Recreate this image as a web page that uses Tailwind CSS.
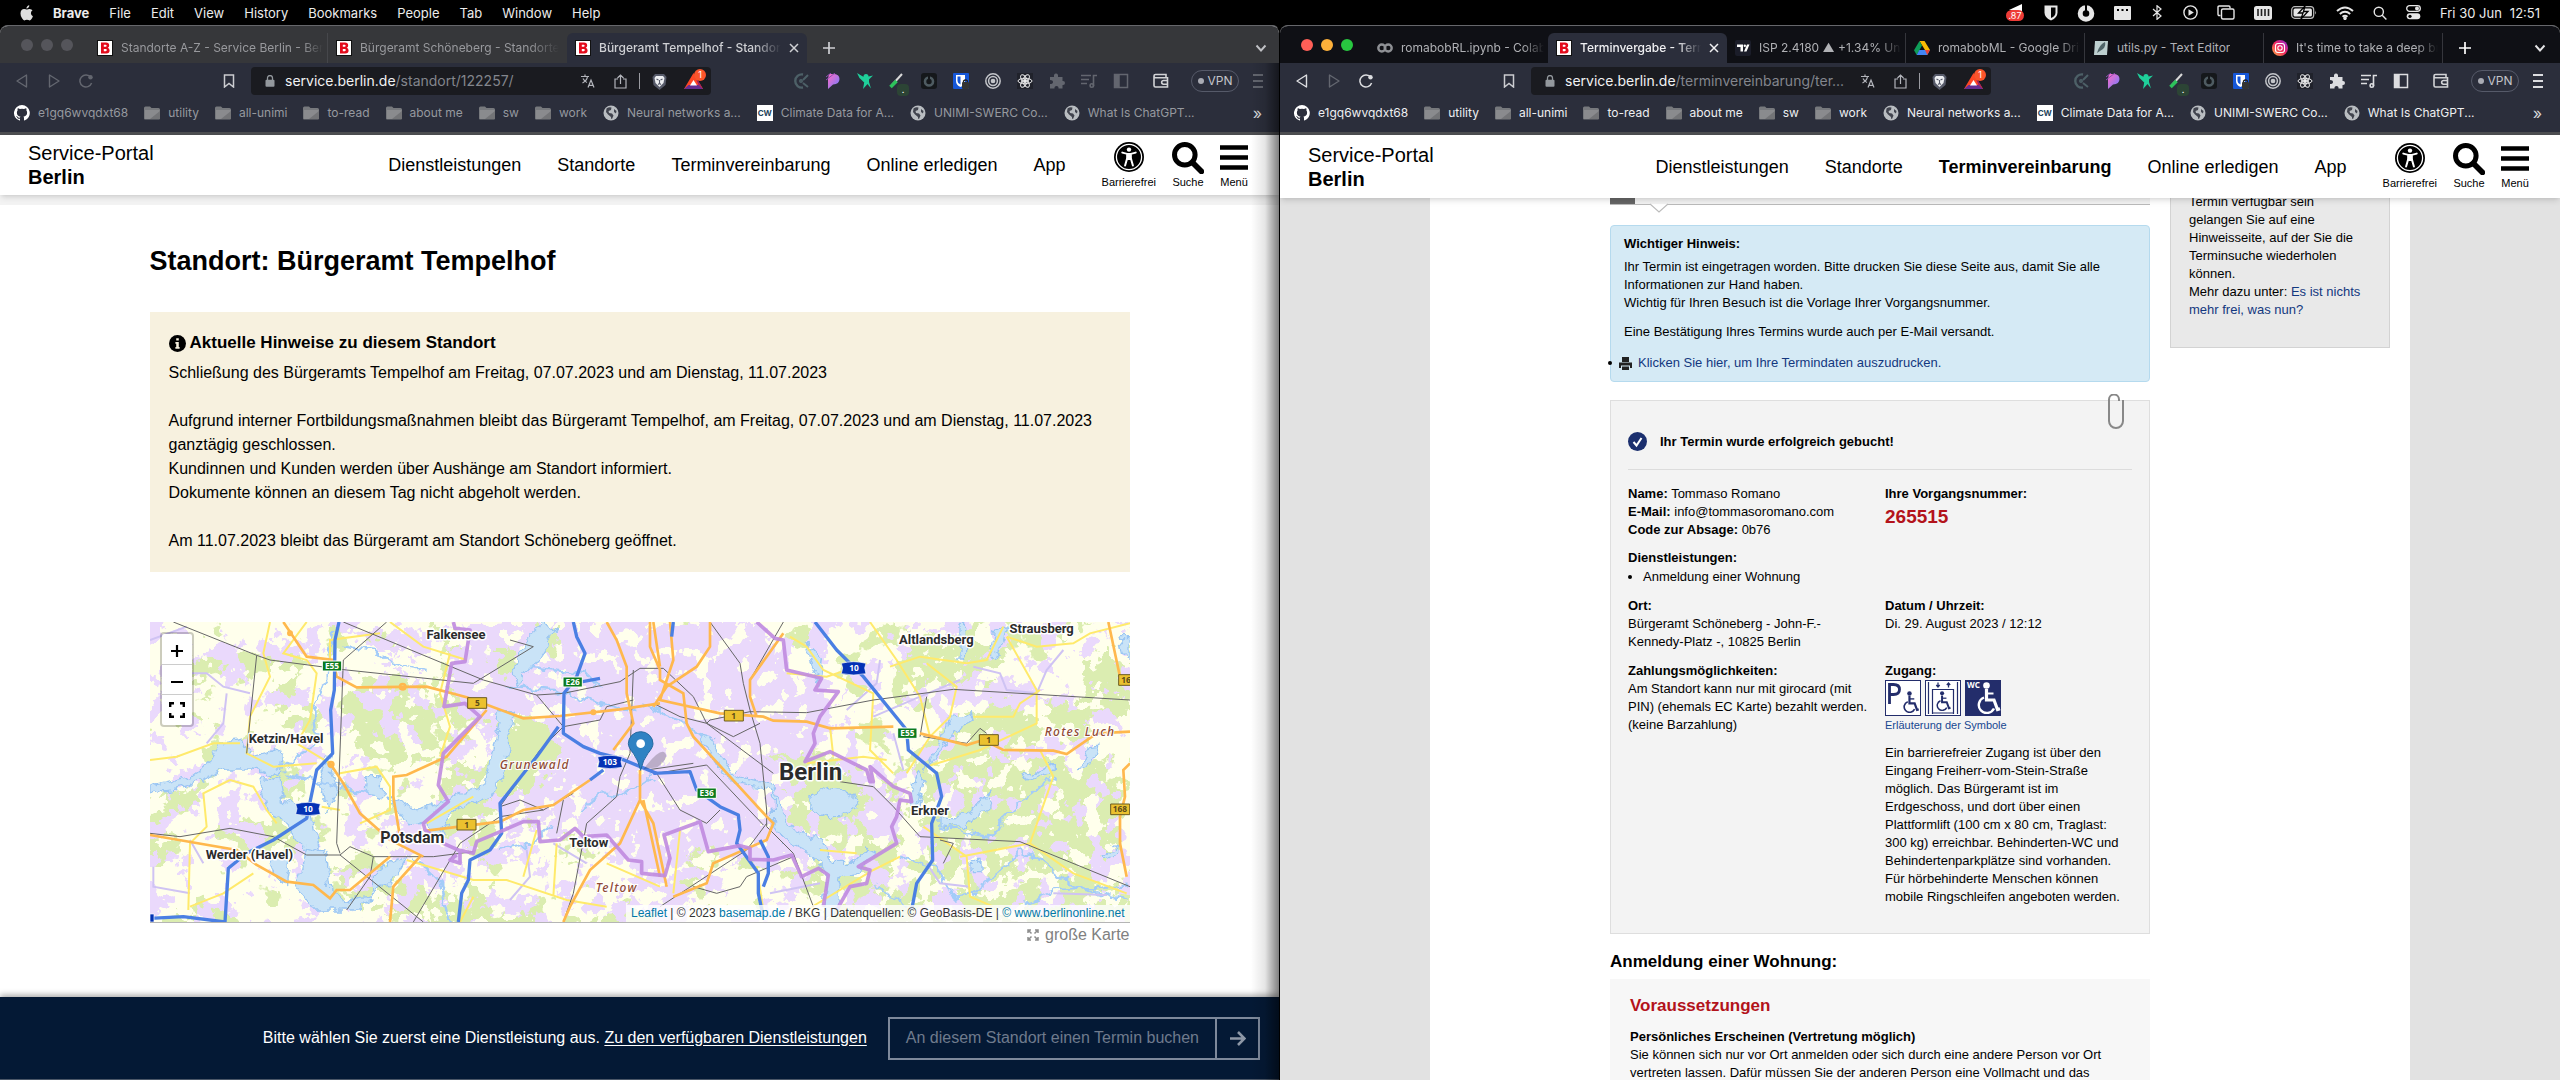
<!DOCTYPE html>
<html lang="de">
<head>
<meta charset="utf-8">
<title>Service-Portal Berlin</title>
<script src="https://cdn.jsdelivr.net/npm/@tailwindcss/browser@4"></script>
</head>
<body class="flex h-screen flex-col overflow-hidden bg-black font-['Liberation_Sans',Arial,sans-serif] text-black">

<!-- shared icon symbols -->
<svg class="hidden" aria-hidden="true">
  <symbol id="favB" viewBox="0 0 16 16"><rect width="16" height="16" fill="#111"/><rect x="1" y="1" width="14" height="14" fill="#fff"/><path fill="#e30b1c" fill-rule="evenodd" d="M4 2.500h5q3.200 0 3.200 2.900 0 1.700-1.500 2.400 1.900.6 1.900 2.700 0 3-3.300 3H4zM6.800 4.800v2h1.900q.9 0 .9-1t-.9-1zM6.800 8.900v2.300h2q1 0 1-1.100T8.800 8.900z"/></symbol>
  <symbol id="close" viewBox="0 0 10 10"><path d="M1 1l8 8M9 1L1 9" stroke="currentColor" stroke-width="1.500"/></symbol>
  <symbol id="plus" viewBox="0 0 12 12"><path d="M6 0v12M0 6h12" stroke="currentColor" stroke-width="1.700"/></symbol>
  <symbol id="chev" viewBox="0 0 12 12"><path d="M1.500 3.500L6 8.500l4.500-5" fill="none" stroke="currentColor" stroke-width="1.900"/></symbol>
  <symbol id="back" viewBox="0 0 14 14"><path d="M11.500 1v12L2 7z" fill="none" stroke="currentColor" stroke-width="1.400" stroke-linejoin="round"/></symbol>
  <symbol id="fwd" viewBox="0 0 14 14"><path d="M2.500 1v12L12 7z" fill="none" stroke="currentColor" stroke-width="1.400" stroke-linejoin="round"/></symbol>
  <symbol id="reload" viewBox="0 0 14 14"><path d="M11.800 3.500A6 6 0 1 0 12.600 9" fill="none" stroke="currentColor" stroke-width="1.500"/><circle cx="11.500" cy="3.200" r="2.200" fill="currentColor"/></symbol>
  <symbol id="lock" viewBox="0 0 10 12"><rect x="0.500" y="4.800" width="9" height="7" rx="1" fill="currentColor"/><path d="M2.500 5V3a2.500 2.500 0 0 1 5 0v2" fill="none" stroke="currentColor" stroke-width="1.300"/></symbol>
  <symbol id="globe" viewBox="0 0 16 16"><circle cx="8" cy="8" r="7.500" fill="#b9bdc1"/><path d="M3.500 3.500Q6 1.500 8.500 2.500L8 5 5.500 6l.5 2 3 .5 1.500 2-1.500 3.500q-1.500 0-1-2L5 9.500 3 7zM11 4l2.500 2-.5 2.500-2-1.500z" fill="#41444e"/></symbol>
  <symbol id="folder" viewBox="0 0 16 14"><path d="M0 2Q0 .5 1.500.5H6L7.500 2H14.500Q16 2 16 3.500V12.500Q16 13.500 15 13.500H1Q0 13.500 0 12.500z" fill="#77797d"/><path d="M1 4h14.500v9H1z" fill="#8a8b8e"/><path d="M16 5v8H6z" fill="#737477"/></symbol>
  <symbol id="a11y" viewBox="0 0 30 30"><circle cx="15" cy="15" r="15"/><circle cx="15" cy="15" r="12.600" fill="none" stroke="#fff" stroke-width="1.300"/><circle cx="15" cy="7.600" r="2.200" fill="#fff"/><path d="M8.300 10.600l5 1.300v4l-2.200 7.600M21.700 10.600l-5 1.300v4l2.200 7.600" fill="none" stroke="#fff" stroke-width="2" stroke-linecap="round"/><path d="M12.500 11h5v7h-5z" fill="#fff"/></symbol>
  <symbol id="lens" viewBox="0 0 32 32"><circle cx="12.800" cy="12.800" r="10.300" fill="none" stroke="#000" stroke-width="5"/><path d="M20.500 20.500l9 9" stroke="#000" stroke-width="5.600" stroke-linecap="round"/></symbol>
  <symbol id="burger" viewBox="0 0 28 26"><path d="M0 2.500h28M0 12.500h28M0 22.500h28" stroke="#000" stroke-width="4.600"/></symbol>
  <symbol id="wheel" viewBox="0 0 24 32"><circle cx="10.500" cy="3.500" r="3.300" fill="currentColor"/><path d="M10.500 7v11h7.500l3.500 9.500 2.500-.8" fill="none" stroke="currentColor" stroke-width="3.200"/><path d="M10.500 11.500h7" stroke="currentColor" stroke-width="2"/><path d="M8 15.500a8 8 0 1 0 10 11" fill="none" stroke="currentColor" stroke-width="2.400"/></symbol>
</svg>

<!-- system menu bar -->
<header class="flex h-[25px] shrink-0 items-center justify-between bg-black pr-5 pl-5 font-[Inter,sans-serif] text-[13px] leading-[16px] text-[#ececec]">
  <nav class="flex items-center gap-5" aria-label="Menü">
    <svg class="h-4 w-[13px]" viewBox="0 0 13 16" fill="#dedede"><path d="M9.300.3q.1 1.300-.8 2.300-.9 1.100-2.100 1-.1-1.200.8-2.200Q8.100.4 9.300.3zM12.500 5.300q-1.600 1-1.600 2.900 0 2.200 2 3.100-.5 1.500-1.400 2.800-.9 1.300-1.900 1.300-.5 0-1.200-.3-.8-.3-1.500-.3t-1.400.3q-.7.300-1.100.3-1.200 0-2.500-2.300Q.5 10.800.5 8.500q0-2.100 1.100-3.400T4.200 3.900q.8 0 1.600.4.700.3 1 .3.400 0 1.200-.4.900-.4 1.700-.3 1.900.1 2.800 1.400z"/></svg>
    <span class="font-bold">Brave</span><span>File</span><span>Edit</span><span>View</span><span>History</span><span>Bookmarks</span><span>People</span><span>Tab</span><span>Window</span><span>Help</span>
  </nav>
  <div class="flex items-center gap-[19px]">
    <svg class="h-[18px] w-5" viewBox="0 0 20 18"><path d="M4 6L17 0v7z" fill="#fff"/><rect x="1" y="6" width="18" height="11" rx="5.500" fill="#ee3b37"/><text x="10" y="15" font-size="9" fill="#fff" text-anchor="middle" font-family="Inter">.87</text></svg>
    <svg class="h-4 w-[14px]" viewBox="0 0 14 16"><path d="M.5.500h13v7q0 5-6.500 8Q.5 12.500.5 7.500z" fill="#e6e6e6"/><path d="M7 2.500h4.500v5q0 3.500-4.500 5.600z" fill="#000"/></svg>
    <svg class="h-[18px] w-[18px]" viewBox="0 0 18 18"><circle cx="9" cy="9.500" r="5.800" fill="none" stroke="#e6e6e6" stroke-width="5"/><path d="M9 0v9" stroke="#000" stroke-width="2"/></svg>
    <svg class="h-[14px] w-[17px]" viewBox="0 0 17 14"><rect width="17" height="14" rx="1" fill="#e6e6e6"/><path d="M3 3h2v2H3zM7.500 3h2v2h-2zM12 3h2v2h-2z" fill="#000"/></svg>
    <svg class="h-[15px] w-[14px]" viewBox="0 0 14 15"><path d="M3 4l8 7-4 3.300V.7L11 4l-8 7" fill="none" stroke="#e6e6e6" stroke-width="1.200"/></svg>
    <svg class="h-[15px] w-[15px]" viewBox="0 0 15 15"><circle cx="7.500" cy="7.500" r="6.600" fill="none" stroke="#e6e6e6" stroke-width="1.400"/><path d="M5.500 4.300v6.400l5.300-3.200z" fill="#e6e6e6"/></svg>
    <svg class="h-[15px] w-[18px]" viewBox="0 0 18 15"><path d="M3.500 10.500H2.200Q1 10.500 1 9.300V2.200Q1 1 2.200 1h9.600Q13 1 13 2.200V3.500" fill="none" stroke="#e6e6e6" stroke-width="1.400"/><rect x="4.500" y="4" width="12.500" height="10" rx="1.500" fill="none" stroke="#e6e6e6" stroke-width="1.400"/></svg>
    <svg class="h-[14px] w-[18px]" viewBox="0 0 18 14"><rect width="18" height="14" rx="2.500" fill="#e6e6e6"/><path d="M4 3v7M7.500 3v7M11 3v7M14.500 3v7" stroke="#222" stroke-width="1.600"/></svg>
    <svg class="h-[13px] w-[26px]" viewBox="0 0 26 13"><rect x=".7" y=".7" width="22" height="11.600" rx="3" fill="none" stroke="#bbb" stroke-width="1.200"/><rect x="2.500" y="2.500" width="18.400" height="8" rx="1.500" fill="#e6e6e6"/><path d="M14 0L7.500 7H12l-2 6 7-7.500h-4.500z" fill="#e6e6e6" stroke="#000" stroke-width="1.300"/><path d="M24.200 4.500q1.500 2 0 4z" fill="#bbb"/></svg>
    <svg class="h-[14px] w-[18px]" viewBox="0 0 18 14" fill="none" stroke="#e6e6e6" stroke-width="2"><path d="M1 5q8-7 16 0M3.800 8q5.200-4.400 10.400 0M6.500 10.800q2.500-2 5 0"/><circle cx="9" cy="12.300" r=".8" fill="#e6e6e6"/></svg>
    <svg class="h-[14px] w-[14px]" viewBox="0 0 14 14" fill="none" stroke="#e6e6e6" stroke-width="1.400"><circle cx="5.800" cy="5.800" r="4.600"/><path d="M9.200 9.200l4.200 4.200"/></svg>
    <svg class="h-[15px] w-[15px]" viewBox="0 0 15 15"><rect x=".7" y=".7" width="13.600" height="5.600" rx="2.800" fill="none" stroke="#e6e6e6" stroke-width="1.300"/><circle cx="11" cy="3.500" r="2" fill="#e6e6e6"/><rect x=".7" y="8.300" width="13.600" height="6" rx="3" fill="#e6e6e6"/><circle cx="4" cy="11.300" r="1.600" fill="#000"/></svg>
    <span class="flex gap-2"><span>Fri 30 Jun</span><span>12:51</span></span>
  </div>
</header>

<!-- toolbar extensions, shared by both windows -->
<template id="tpl-ext">
  <div class="flex items-center gap-4">
    <svg class="h-4 w-4" viewBox="0 0 16 16" fill="none" stroke="#4d6067" stroke-width="2.400"><path d="M10 1.500A6.600 6.600 0 1 0 10 14.500"/><path d="M15 2l-5 5M15 14l-5-4" stroke-width="2"/><circle cx="8" cy="8" r=".8"/></svg>
    <svg class="h-4 w-4" viewBox="0 0 16 16"><defs><linearGradient id="pg" x1="0" y1="0" x2="1" y2="1"><stop offset="0" stop-color="#ff6cc4"/><stop offset="1" stop-color="#6f7bff"/></linearGradient></defs><path d="M4 1h4q6.500 0 6.500 5T8 11.500L3 16V6z" fill="url(#pg)"/><path d="M1 4l5-4M1 7l9-7" stroke="#8c4fb8" stroke-width="1"/></svg>
    <svg class="h-4 w-4" viewBox="0 0 16 16"><path d="M0 0l5 3 1.500.8Q6.500 1 9 1t2.500 2.500L16 2.500 12 6.500V9l2 6.500-3.500-4.500L6 16l1.200-6.500L2.500 5z" fill="#1fcf9a"/></svg>
    <div class="relative h-4 w-4"><svg class="h-4 w-4" viewBox="0 0 16 16"><path d="M3 12L13 1" stroke="#d9d9d9" stroke-width="2"/><path d="M1.500 14l6-6" stroke="#2dc25b" stroke-width="3.500"/></svg><span class="absolute top-[11px] left-2 flex h-3 w-3 items-center justify-center rounded-sm bg-[#2c4435] text-[9px] text-white">.</span></div>
    <svg class="h-4 w-4" viewBox="0 0 16 16"><rect width="16" height="16" rx="3" fill="#15181b"/><circle cx="8" cy="8.500" r="4" fill="none" stroke="#4e5b61" stroke-width="2.600"/><path d="M8 2v6" stroke="#15181b" stroke-width="2"/></svg>
    <svg class="h-4 w-4" viewBox="0 0 16 16"><rect width="16" height="16" rx="1" fill="#1657d8"/><path d="M3 2h9v6q0 4-4.500 6Q3 12 3 8z" fill="#fff"/><path d="M4.500 3.500h3v8Q4.500 10 4.500 8z" fill="#1657d8"/><rect x="9" y="9" width="7" height="7" rx="1" fill="#333"/><path d="M10.500 9V8q2-2 4 0v1" fill="none" stroke="#222" stroke-width="1.300"/></svg>
    <svg class="h-4 w-4" viewBox="0 0 16 16" fill="none" stroke="#c3c5c9" stroke-width="1.500"><circle cx="8" cy="8" r="7.200"/><circle cx="8" cy="8" r="4.400"/><circle cx="8" cy="8" r="1.600" fill="#c3c5c9"/></svg>
    <svg class="h-4 w-4" viewBox="0 0 16 16" fill="none" stroke="#e9e9ea" stroke-width="1"><rect width="16" height="16" fill="#20222b" stroke="none"/><ellipse cx="8" cy="8" rx="7" ry="2.700"/><ellipse cx="8" cy="8" rx="7" ry="2.700" transform="rotate(60 8 8)"/><ellipse cx="8" cy="8" rx="7" ry="2.700" transform="rotate(120 8 8)"/><circle cx="8" cy="8" r="1.500" fill="#e9e9ea"/></svg>
    <svg class="h-4 w-4" viewBox="0 0 16 16" fill="currentColor"><path d="M1 4h4Q4.500.5 7 .5T9 4h4.500v4q2.500-.3 2.500 2t-2.500 2v3.500H9.500q.3-2.500-2-2.500t-2 2.500H1V11q3 0 3-2T1 7z"/></svg>
    <svg class="h-4 w-4" viewBox="0 0 16 16" fill="none" stroke="currentColor" stroke-width="1.600"><path d="M0 2.500h10M0 6.500h8M0 10.500h6M12.500 13V2.500H16"/><circle cx="10.800" cy="12.500" r="1.700"/></svg>
    <svg class="h-4 w-4" viewBox="0 0 16 16" fill="none" stroke="currentColor" stroke-width="1.500"><rect x="1.500" y="1.500" width="13" height="13"/><path d="M2 2h4v12H2z" fill="currentColor"/></svg>
  </div>
  <svg class="ml-6 h-4 w-4 text-[#d2d3d6]" viewBox="0 0 16 16" fill="none" stroke="currentColor" stroke-width="1.600"><path d="M13 4V1.500H2.500Q1 1.500 1 3t1.500 1.700H14.500V14H2.500Q1 14 1 12.500V3"/><path d="M15 7.500H10.500a1.800 1.800 0 0 0 0 3.700H15"/></svg>
  <button class="ml-[22px] flex h-[22px] w-12 items-center justify-center gap-1 rounded-full border border-[#565a69] text-[12px] leading-[14px] text-[#c3c4ca]"><span class="h-[6px] w-[6px] rounded-full bg-[#a9abb3]"></span>VPN</button>
  <svg class="ml-[14px] h-4 w-[10px]" viewBox="0 0 10 16" stroke="currentColor" stroke-width="2"><path d="M0 2h10M0 8h10M0 14h10"/></svg>
</template>

<!-- right-hand part of the address field -->
<template id="tpl-addr">
  <svg class="h-[14px] w-[14px]" viewBox="0 0 14 14" fill="none" stroke="#b3b5bb" stroke-width="1.200"><path d="M0 2.500h8M4 .5v2M1.500 9Q6 6.500 6.500 2.500M2 4.500q1.500 3 4 4M7 13.500L10 6l3 7.500M8 11.300h4"/></svg>
  <svg class="ml-[19px] h-[15px] w-[13px]" viewBox="0 0 13 15" fill="none" stroke="#b3b5bb" stroke-width="1.200"><path d="M4 5H1v9h11V5H9M6.500 10V1M3.500 4l3-3 3 3"/></svg>
  <span class="mx-3 h-4 w-px bg-[#9a9ba1]"></span>
  <svg class="h-[17px] w-[15px]" viewBox="0 0 15 17"><path d="M3 1h9l2.500 3-1 8-6 5-6-5-1-8z" fill="#565a69"/><path d="M4 3h7l1.500 2-1 5-4 4-4-4-1-5z" fill="#eceef1"/><path d="M4.500 6l2 1M10.500 6l-2 1M7.500 7v3M6 11.500l1.500-1 1.500 1" stroke="#565a69" stroke-width="1.100" fill="none"/></svg>
  <span class="relative mr-2 ml-[17px] h-[17px] w-[19px]"><svg class="h-[17px] w-[19px]" viewBox="0 0 19 17"><path d="M9.500 0L0 16h19z" fill="#ff4724"/><path d="M0 16h19l-4.500-4h-10z" fill="#662d91"/><path d="M9.500 0L19 16l-4.500-4z" fill="#9e1f63"/><path d="M9.500 7l-3.500 5.500h7z" fill="#fff"/></svg><span class="absolute -top-1 left-[10px] flex h-3 w-3 items-center justify-center rounded-full bg-[#fb542b] text-[9px] leading-none text-white">1</span></span>
</template>

<!-- bookmarks bar, shared by both windows -->
<template id="tpl-marks">
  <a href="#" class="flex items-center gap-2"><svg class="h-4 w-4" viewBox="0 0 16 16" fill="#fff"><path d="M8 0a8 8 0 0 0-2.500 15.600c.4 0 .5-.2.500-.4v-1.500c-2.200.5-2.700-1-2.700-1-.4-.9-.9-1.200-.9-1.200-.7-.5 0-.5 0-.5.8.1 1.200.8 1.200.8.7 1.300 1.900.9 2.400.7 0-.5.300-.9.500-1.100-1.800-.2-3.600-.9-3.600-4 0-.9.300-1.600.8-2.100-.1-.2-.4-1 .1-2.100 0 0 .7-.2 2.200.8a7.700 7.700 0 0 1 4 0c1.500-1 2.200-.8 2.200-.8.5 1.100.2 1.900.1 2.100.5.5.8 1.200.8 2.100 0 3.100-1.900 3.800-3.700 4 .3.300.6.700.6 1.500v2.200c0 .2.100.5.600.4A8 8 0 0 0 8 0z"/></svg>e1gq6wvqdxt68</a>
  <a href="#" class="flex items-center gap-2"><svg class="h-[14px] w-4"><use href="#folder"/></svg>utility</a>
  <a href="#" class="flex items-center gap-2"><svg class="h-[14px] w-4"><use href="#folder"/></svg>all-unimi</a>
  <a href="#" class="flex items-center gap-2"><svg class="h-[14px] w-4"><use href="#folder"/></svg>to-read</a>
  <a href="#" class="flex items-center gap-2"><svg class="h-[14px] w-4"><use href="#folder"/></svg>about me</a>
  <a href="#" class="flex items-center gap-2"><svg class="h-[14px] w-4"><use href="#folder"/></svg>sw</a>
  <a href="#" class="flex items-center gap-2"><svg class="h-[14px] w-4"><use href="#folder"/></svg>work</a>
  <a href="#" class="flex items-center gap-2"><svg class="h-4 w-4"><use href="#globe"/></svg>Neural networks a...</a>
  <a href="#" class="flex items-center gap-2"><span class="flex h-4 w-4 items-center justify-center bg-white text-[8px] font-bold text-[#24445c]">CW</span>Climate Data for A...</a>
  <a href="#" class="flex items-center gap-2"><svg class="h-4 w-4"><use href="#globe"/></svg>UNIMI-SWERC Co...</a>
  <a href="#" class="flex items-center gap-2"><svg class="h-4 w-4"><use href="#globe"/></svg>What Is ChatGPT...</a>
  <span class="ml-auto text-[16px] leading-none text-[#d8d9dc]">»</span>
</template>

<div class="grid min-h-0 flex-1 grid-cols-2">

<!-- left window -->
<section class="relative flex min-h-0 min-w-0 flex-col overflow-hidden rounded-t-lg border-t border-r border-t-[#66676b] border-r-black bg-white">
  <div class="shrink-0 font-[Inter,sans-serif] text-[12px] leading-[16px]">
    <div class="flex h-[37px] items-end bg-[#36373a] text-[#98999d]">
      <div class="flex h-full w-[89px] shrink-0 items-center gap-2 pl-[21px]"><span class="h-3 w-3 rounded-full bg-[#55555b]"></span><span class="h-3 w-3 rounded-full bg-[#55555b]"></span><span class="h-3 w-3 rounded-full bg-[#55555b]"></span></div>
      <div class="flex h-[30px] w-[239px] items-center gap-2 border-r border-[#46474b] pr-1 pl-2"><svg class="h-4 w-4 shrink-0"><use href="#favB"/></svg><span class="overflow-hidden whitespace-nowrap [mask-image:linear-gradient(to_right,#000_90%,transparent)]">Standorte A-Z - Service Berlin - Berlin.de</span></div>
      <div class="flex h-[30px] w-[239px] items-center gap-2 pr-1 pl-2"><svg class="h-4 w-4 shrink-0"><use href="#favB"/></svg><span class="overflow-hidden whitespace-nowrap [mask-image:linear-gradient(to_right,#000_85%,transparent)]">Bürgeramt Schöneberg - Standorte</span></div>
      <div class="flex h-[30px] w-[240px] items-center gap-2 rounded-t-md bg-[#2b2e3b] px-2 font-medium text-[#cfd0d4]"><svg class="h-4 w-4 shrink-0"><use href="#favB"/></svg><span class="flex-1 overflow-hidden whitespace-nowrap [mask-image:linear-gradient(to_right,#000_85%,transparent)]">Bürgeramt Tempelhof - Standorte</span><button aria-label="Tab schließen"><svg class="h-[10px] w-[10px]"><use href="#close"/></svg></button></div>
      <button class="mb-[9px] ml-4 text-[#cfd0d4]" aria-label="Neuer Tab"><svg class="h-3 w-3"><use href="#plus"/></svg></button>
      <button class="mr-3 mb-[9px] ml-auto text-[#c0c1c5]" aria-label="Tabs suchen"><svg class="h-3 w-3"><use href="#chev"/></svg></button>
    </div>
    <div class="flex h-9 items-center bg-[#2b2e3b] pr-4 pl-[15px] text-[#63666f]">
      <button aria-label="Zurück"><svg class="h-[14px] w-[14px]"><use href="#back"/></svg></button>
      <button class="ml-[18px]" aria-label="Vor"><svg class="h-[14px] w-[14px]"><use href="#fwd"/></svg></button>
      <button class="ml-[18px]" aria-label="Neu laden"><svg class="h-[14px] w-[14px]"><use href="#reload"/></svg></button>
      <svg class="ml-[130px] h-[14px] w-[12px]" viewBox="0 0 12 14" fill="none" stroke="#cbccd0" stroke-width="1.500"><path d="M1.500 1h9v12L6 9.500 1.500 13z"/></svg>
      <div class="ml-[16px] flex h-7 w-[460px] items-center rounded bg-[#1a1b20] pl-[14px] text-[14px]">
        <svg class="h-3 w-[10px] text-[#93989d]"><use href="#lock"/></svg>
        <span class="ml-[10px] flex-1 whitespace-nowrap text-[#83868d]"><span class="text-[#f1f2f3]">service.berlin.de</span>/standort/122257/</span>
        <div class="flex items-center" data-tpl="tpl-addr"></div>
      </div>
      <div class="ml-auto flex items-center text-[#63666f]" data-tpl="tpl-ext"></div>
    </div>
    <div class="flex h-[33px] items-center gap-4 bg-[#2b2e3b] pr-[17px] pb-[6px] pl-[14px] text-[#96999f]" data-tpl="tpl-marks"></div>
    <div class="h-[3px] bg-[#4c4d50]"></div>
  </div>

  <div class="z-10 flex h-[60px] shrink-0 items-center bg-white pr-[31px] pl-7 shadow-md">
    <div class="text-[20px] leading-6">Service-Portal<br><b>Berlin</b></div>
    <nav class="ml-auto flex gap-9 text-[18px] leading-6"><a href="#">Dienstleistungen</a><a href="#">Standorte</a><a href="#">Terminvereinbarung</a><a href="#">Online erledigen</a><a href="#">App</a></nav>
    <div class="ml-9 flex gap-4 text-[11px] leading-[14px]">
      <button class="flex flex-col items-center"><svg class="mb-[3px] h-[30px] w-[30px]"><use href="#a11y"/></svg>Barrierefrei</button>
      <button class="flex flex-col items-center"><svg class="mb-[1px] h-8 w-8"><use href="#lens"/></svg>Suche</button>
      <button class="flex flex-col items-center"><svg class="mt-[3px] mb-1 h-[26px] w-7"><use href="#burger"/></svg>Menü</button>
    </div>
  </div>

  <main class="min-h-0 flex-1 overflow-hidden text-[16px] leading-6">
    <div class="h-[10px] bg-[#f3f3f3]"></div>
    <div class="mx-auto mt-[38px] w-[980px]">
      <h1 class="text-[27px] leading-9 font-bold">Standort: Bürgeramt Tempelhof</h1>
      <div class="mt-[33px] bg-[#f7f1df] px-[19px] py-[19px]">
        <h2 class="flex items-center gap-1 text-[17px] font-bold"><svg class="h-[17px] w-[17px]" viewBox="0 0 16 16"><circle cx="8" cy="8" r="8"/><path d="M6.800 3h2.400v2.200H6.800zM6 6.700h3.200v4.600H10V13H6v-1.700h.8V8.300H6z" fill="#f7f1df"/></svg>Aktuelle Hinweise zu diesem Standort</h2>
        <p class="mt-[6px]">Schließung des Bürgeramts Tempelhof am Freitag, 07.07.2023 und am Dienstag, 11.07.2023<br><br>Aufgrund interner Fortbildungsmaßnahmen bleibt das Bürgeramt Tempelhof, am Freitag, 07.07.2023 und am Dienstag, 11.07.2023<br>ganztägig geschlossen.<br>Kundinnen und Kunden werden über Aushänge am Standort informiert.<br>Dokumente können an diesem Tag nicht abgeholt werden.<br><br>Am 11.07.2023 bleibt das Bürgeramt am Standort Schöneberg geöffnet.</p>
      </div>
      <div class="relative mt-[50px] border-b border-[#b5b5b5]">
        <svg class="h-[300px] w-full" viewBox="30 36 2940 900" preserveAspectRatio="xMidYMid slice">
          <defs>
            <filter id="rough" x="-5%" y="-5%" width="110%" height="110%" color-interpolation-filters="sRGB"><feTurbulence type="fractalNoise" baseFrequency=".02" numOctaves="4" seed="4"/><feDisplacementMap in="SourceGraphic" scale="110" xChannelSelector="R" yChannelSelector="G"/></filter>
            <filter id="wav" x="-5%" y="-5%" width="110%" height="110%" color-interpolation-filters="sRGB"><feTurbulence type="fractalNoise" baseFrequency=".03" numOctaves="3" seed="9"/><feDisplacementMap in="SourceGraphic" scale="40" xChannelSelector="R" yChannelSelector="G"/></filter>
            <filter id="spotG" x="0" y="0" width="100%" height="100%" color-interpolation-filters="sRGB"><feTurbulence type="fractalNoise" baseFrequency=".008" numOctaves="5" seed="12"/><feColorMatrix values="0 0 0 0 .859 0 0 0 0 .929 0 0 0 0 .69 0 0 0 60 -33.500"/></filter>
            <filter id="spotP" x="0" y="0" width="100%" height="100%" color-interpolation-filters="sRGB"><feTurbulence type="fractalNoise" baseFrequency=".013" numOctaves="5" seed="31"/><feColorMatrix values="0 0 0 0 .918 0 0 0 0 .851 0 0 0 0 .988 0 0 0 60 -34"/></filter>
            <filter id="spotY" x="0" y="0" width="100%" height="100%" color-interpolation-filters="sRGB"><feTurbulence type="fractalNoise" baseFrequency=".018" numOctaves="4" seed="7"/><feColorMatrix values="0 0 0 0 1 0 0 0 0 1 0 0 0 0 .925 0 0 0 60 -36.500"/></filter>
          </defs>
          <rect x="30" y="36" width="2940" height="900" fill="#ffffec"/>
          <rect x="30" y="36" width="2940" height="900" filter="url(#spotG)"/>
          <g fill="#dbedb1" filter="url(#rough)">
            <path d="M640 220L780 190 890 260 890 400 920 440 760 480 640 400 610 300zM920 460L1070 470 1060 620 940 680 860 640zM1130 330L1240 330 1280 440 1180 580 1090 600 1060 520zM590 760L700 740 720 850 620 860zM780 790L860 800 930 900 820 936 740 930zM980 820L1060 840 1040 920 980 930z"/>
            <path d="M1880 400L2060 440 2230 520 2290 600 2270 760 2200 900 2100 900 2010 700 1930 600zM2370 470L2640 430 2900 440 2890 560 2950 640 2900 800 2700 760 2500 850 2390 780 2350 620zM2340 80L2500 40 2620 60 2580 180 2420 240 2330 150zM2560 250L2700 300 2680 420 2480 440 2420 340zM2300 820L2500 860 2800 800 2960 840 2960 936 2200 936zM2860 120L2970 120 2970 320 2800 300z"/>
          </g>
          <rect x="30" y="36" width="2940" height="900" filter="url(#spotP)"/>
          <g fill="#ead9fb" filter="url(#rough)">
            <path d="M980 36L1860 36 1920 80 1950 180 2080 230 2000 460 1890 420 1950 600 1990 700 2040 780 1830 760 1700 720 1570 790 1450 760 1300 670 1190 640 1080 690 1120 590 1260 430 1200 330 1060 320 950 290 930 180z"/>
            <path d="M690 640L860 640 1000 730 940 830 840 770 720 700zM330 400L420 420 380 500 310 450zM640 60L880 70 860 120 700 110zM2150 520L2300 560 2240 700 2180 680zM2460 190L2700 220 2660 300 2500 260zM1450 800L1660 830 1640 920 1480 890z"/>
          </g>
          <rect x="30" y="36" width="2940" height="900" filter="url(#spotY)"/>
          <g fill="#dbedb1" filter="url(#rough)"><path d="M1040 130L1120 110 1160 180 1100 200zM1100 340L1230 350 1260 430 1110 560 1060 560zM1200 50L1270 60 1240 130 1190 120zM1900 420L2060 460 2180 560 2160 640 2000 560z"/></g>
          <!-- lakes and rivers -->
          <g fill="#c9e3f7" stroke="#9ac6f3" stroke-width="4" filter="url(#wav)">
            <path d="M30 530L150 500 210 450 240 400 310 390 330 440 400 420 430 430 420 500 340 480 260 480 160 520 100 540 30 545z"/>
            <path d="M360 500L420 510 430 570 510 600 540 720 500 730 440 640 380 610z"/>
            <path d="M500 710L560 730 570 840 620 870 700 860 700 780 800 740 770 790 660 900 520 900 470 830z"/>
            <path d="M680 500L730 500 725 560 675 550z"/><path d="M560 440L590 540 560 600 540 500z"/><path d="M380 740L450 740 440 820 390 780z"/>
            <path d="M740 560L830 600 880 590 940 560 1040 520 1080 300 1120 310 1100 460 1060 560 940 600 900 680 850 650 790 630z"/>
            <path d="M1210 40L1250 60 1200 140 1150 200 1130 230 1120 190 1150 100z"/>
            <path d="M2010 560L2060 535 2130 545 2150 590 2110 620 2050 620 2010 600z"/>
            <path d="M1670 370L1710 380 1740 440 1790 500 1900 520 1920 600 1960 660 2040 690 2080 760 2140 760 2180 720 2210 730 2150 790 2100 800 2090 900 2050 930 2060 800 2010 730 1930 690 1900 640 1900 540 1780 520 1740 480z"/>
            <path d="M2330 480L2350 500 2330 600 2310 600zM2430 330L2490 305 2500 330 2440 370 2350 480zM2560 60L2600 50 2580 130 2550 150zM2460 40L2480 40 2480 150 2460 150zM2000 100L2050 150 2040 220 2010 160zM2820 470L2850 410 2880 405 2860 460 2810 490zM2650 500L2740 460 2740 480 2660 510zM2400 620L2460 625 2520 580 2550 540 2540 600 2470 650 2400 645zM2890 740L2930 710 2930 730 2900 750zM2490 760h30v25h-30zM2940 80L2970 80 2970 150 2950 130z"/>
          </g>
          <g fill="none" stroke="#a3ccf8" stroke-width="7" filter="url(#wav)">
            <path d="M520 300L560 200 580 60M520 300L530 400 410 480M430 490L690 550M820 740L900 820 930 936M600 110L700 120 750 160 860 180M1170 170L1340 190 1380 240M1080 720L1180 700 1230 640M1330 600L1380 550 1450 555 1540 500M1100 230L1240 240 1340 270 1480 300M1500 280L1620 330 1680 380M2280 740L2400 780 2440 860 2500 850 2600 770 2640 720 2700 750 2800 830 2960 870M2400 650L2560 680 2580 640 2660 560 2740 500M2200 820L2300 890M2660 880L2750 840 2960 830"/>
          </g>
          <!-- minor roads -->
          <g fill="none" stroke="#cfc3f3" stroke-width="6"><path d="M30 90L140 50M110 190L200 190 250 230 330 250M260 250L250 340 200 400M150 690L190 760M40 770L40 830 150 850M1110 870L1170 800 1160 720M1240 700L1340 760M2120 300L2210 220 2220 150M2200 320L2340 260 2460 210M2500 170L2580 190 2600 240 2690 250 2720 180 2770 120M2260 370L2290 480M2360 760L2400 820 2490 830M2740 850L2900 855M1890 850L2040 820"/></g>
          <g fill="none" stroke="#ffea6b" stroke-width="6">
            <path d="M390 36L370 130 390 200 330 320 320 430 400 470 530 460M500 36L430 130 500 150 530 190 510 330 470 400 570 460M570 150L570 90 720 70M30 450L110 440 220 400 300 400M270 510L340 530 380 600 410 640M270 510L190 550 200 650 150 700 145 900M600 490L710 470 750 530 750 600 660 640M750 36L850 110 980 150M930 130L900 250 930 350 900 440M860 640L1000 560M800 750L1000 810 1100 810 1280 870 1400 890M1000 860L960 936M1400 760L1560 830M1150 800L1190 660M1240 860L1250 700M545 590L600 600M150 890L250 850 340 790"/>
            <path d="M1950 80L2000 110 2050 180 2200 250 2190 420 2260 490M2190 36L2270 150 2340 260 2370 380 2300 490M1940 190L2060 200 2180 160M2250 170L2340 140 2480 160 2540 150 2590 50M2360 160L2450 230 2430 320 2370 380M2600 80L2690 240 2690 340 2520 420 2360 470M2600 80L2690 110 2800 100 2850 70 2970 40M2500 320L2620 320 2640 280 2700 240M2700 420L2740 500 2670 700M2350 650L2480 740 2490 860 2560 890M2460 740L2670 700 2800 790 2960 850M2000 460L2170 440 2240 450M2070 350L2080 440M1620 660L1600 850M1850 770L1870 900M2000 900L2200 780 2280 740M2040 720L2150 730"/>
          </g>
          <!-- railways -->
          <g fill="none" stroke="#666" stroke-width="3">
            <path d="M100 36L350 136 390 150 620 180 1000 220 1180 110 1110 90M350 136L330 330 320 430M610 36L1030 210 1190 255 1270 250 1440 215 1500 175M740 36L610 150 590 700 600 730M30 670L120 680 270 655 400 680 500 735 600 735 630 710 700 740 880 740 1000 725M600 735L850 936M820 936L960 700 1080 620 1210 600M700 740L690 800 620 900M1270 350L1200 420 1080 590M1190 255L1270 350 1380 330 1400 290 1480 270M1480 180L1470 430 1440 500 1430 560 1340 640 1300 850 1270 936M1080 590L1140 570 1210 600 1300 550M1270 570L1250 670"/>
            <path d="M1500 175L1570 175 1660 260 1700 340 1710 330 1830 305 2000 308 2200 270 2440 238 2970 270M1710 36L1800 160 1810 220 1830 300 1860 400 1880 600 1880 650 1960 730 2020 890M1930 36L1830 210M1550 490L1700 465 1870 645M1700 340L1900 490M1520 480L1660 460M1550 490L1620 600 1700 640 1740 600M1880 640L1820 720 1560 890M1960 740L1820 800 1800 830 1730 850 1660 830M2100 515L2200 530 2260 590 2340 680 2640 695 2970 830M2340 380L2360 260M2350 380L2480 400 2520 355 2540 370M2410 760L2440 700 2400 690M1540 280L1620 320 1700 340 1780 380 1860 340"/>
          </g>
          <!-- trunk roads -->
          <g fill="none" stroke="#ffb84d" stroke-width="8">
            <path d="M430 36L500 140 580 150 590 200 650 232 860 230 980 262 1150 325 1260 318 1440 298 1560 280M30 675L290 720 350 765 440 815 520 825 570 865 590 840 630 840 750 740M570 460L610 520 660 610 750 690 830 730 850 740M1040 300L920 440 800 495 760 500 760 560 780 680M860 662L1080 635 1150 600 1240 585 1350 510M1400 36L1430 90 1460 170 1460 250 1480 340 1420 420M1540 36L1560 170M840 740L760 830 750 936M1500 480L1500 570 1440 700 1350 780 1290 890 1270 936M1500 570L1540 640 1580 830M1510 570L1560 800"/>
            <path d="M1530 36L1530 110 1560 180 1560 210 1630 250 1640 340 1660 380 1880 620 1900 640 1880 690 1720 760 1700 820 1600 860M1710 36L1710 110 1670 170 1580 230 1540 290M1590 36L1600 150 1560 270 1740 310 1870 320 1900 332 2000 335 2070 355 2260 350M1930 70L1830 210 1830 260 1850 320M2340 370L2480 405 2530 390 2590 420 2740 422 2780 432 2870 370 2970 365M2905 36L2940 200M2970 460L2950 480 2955 560 2940 620 2940 700 2960 800"/>
            <circle cx="450" cy="70" r="5"/><circle cx="788" cy="230" r="8"/><circle cx="1360" cy="307" r="5"/><circle cx="573" cy="463" r="7"/>
          </g>
          <!-- motorways -->
          <g fill="none" stroke="#4a7fe3" stroke-width="10" stroke-linejoin="round">
            <path d="M597 36L585 90 583 240 572 300 578 430 530 480 500 625 400 690 320 730 265 775 255 936 130 920 30 925M1300 36L1310 80 1335 130 1310 200 1272 250 1270 370 1330 410 1380 430 1440 445 1550 490M1255 350L1190 440 1080 580 1085 670 1050 720 990 750 985 810 965 850 955 936M1390 480L1350 510M1300 220L1380 205"/>
            <path d="M2025 36L2090 120 2170 200 2300 360 2305 420 2390 490 2405 560 2375 640 2378 750 2330 820 2315 900M1540 490L1650 485 1670 540 1740 590 1795 615 1800 660 1790 700 1855 790 1855 850 1870 920M1860 690L1885 740 1885 790 1870 830M1600 36L1595 80"/>
          </g>
          <!-- city limits -->
          <g fill="none" stroke="#c08be0" stroke-width="11" stroke-linejoin="round" opacity=".9">
            <path d="M940 36L945 55 990 60 975 155 935 160 912 290 975 280 1020 320 910 430 895 525 925 575 850 640 855 660 910 700 955 720 1000 730 1010 695 1150 635 1195 635 1200 695 1260 690 1305 655 1330 680 1400 675 1465 750 1505 755 1505 790 1575 797 1590 745 1572 675 1680 635 1705 725 1800 707 1830 715 1830 748 1900 750 1955 735 1985 800 2035 775 2065 795 2050 890"/>
            <path d="M950 735L930 750 960 760 960 725"/>
            <path d="M1850 36L1905 85 1930 90 1940 180 2045 205 2025 240 2095 245 2040 320 2020 370 2025 400 1995 455 2070 425 2180 480 2190 515 2200 515 2190 470 2260 530 2310 550 2315 575 2280 570 2270 620 2255 650 2270 700 2155 770 2190 780 2180 820 2130 830 2090 900"/>
          </g>
          <!-- road signs -->
          <g font-family="Noto Sans" font-weight="700" font-size="25" text-anchor="middle" fill="#fff">
            <g fill="#0b7a1e" stroke="#fff" stroke-width="3"><path d="M547 153h58v30h-58zM1269 201h58v30h-58zM2273 354h58v31h-58zM1671 534h58v31h-58z"/></g>
            <text x="576" y="178">E55</text><text x="1298" y="225">E26</text><text x="2302" y="379">E55</text><text x="1700" y="559">E36</text>
            <g fill="#0432b5" stroke="#fff" stroke-width="2"><path d="M467 582q37-10 74 0l-4 14 4 17q-37 8-74 0l4-17zM1373 441q37-10 74 0l-4 14 4 17q-37 8-74 0l4-17zM2104 160q37-10 74 0l-4 14 4 17q-37 8-74 0l4-17zM30 912h12v24H30z"/></g>
            <text x="504" y="605">10</text><text x="1410" y="464">103</text><text x="2142" y="183">10</text>
            <g fill="#ebc12f" stroke="#6b5c21" stroke-width="3"><path d="M983 263h57v32h-57zM951 628h57v32h-57zM1753 301h57v32h-57zM2518 374h57v32h-57zM2936 194h40v32h-40zM2912 582h57v32h-57z"/></g>
            <g fill="#5b4b18"><text x="1012" y="289">5</text><text x="980" y="654">1</text><text x="1781" y="327">1</text><text x="2546" y="400">1</text><text x="2958" y="219">16</text><text x="2940" y="607">168</text></g>
          </g>
          <!-- place names -->
          <g font-family="Roboto" font-weight="700" font-size="39" fill="#2b2b2b" stroke="#fff" stroke-width="9" stroke-linejoin="round" paint-order="stroke" text-anchor="middle">
            <text x="948" y="88">Falkensee</text><text x="438" y="398">Ketzin/Havel</text><text x="328" y="748">Werder (Havel)</text><text x="1346" y="710">Teltow</text><text x="2389" y="101">Altlandsberg</text><text x="2705" y="69">Strausberg</text><text x="2370" y="614">Erkner</text>
            <text x="817" y="699" font-size="48">Potsdam</text><text x="2012" y="509" font-size="72">Berlin</text>
          </g>
          <g class="tracking-widest" font-family="Noto Sans" font-style="italic" font-weight="500" font-size="36" fill="#8f4a34" stroke="#fff" stroke-width="6" paint-order="stroke" text-anchor="middle"><text x="1184" y="476">Grunewald</text><text x="1430" y="846">Teltow</text><text x="2820" y="377">Rotes Luch</text></g>
          <!-- marker -->
          <path d="M1510 478q45-60 62-52 20 14-20 46z" fill="#000" opacity=".2"/>
          <path d="M1502 481Q1495 450 1480 430 1465 412 1465 401A37 36 0 0 1 1539 401Q1539 412 1524 430 1508 450 1502 481z" fill="#2f82c3" stroke="#24689f" stroke-width="3"/><circle cx="1502" cy="401" r="13" fill="#fff"/>
        </svg>
        <div class="absolute top-[10px] left-[10px] w-[34px] overflow-hidden rounded border-2 border-black/20 bg-white bg-clip-padding">
          <button class="flex h-[31px] w-full items-center justify-center border-b border-[#ccc] pt-1" aria-label="Vergrößern"><svg class="h-[14px] w-[14px]" viewBox="0 0 14 14"><path d="M7 1v12M1 7h12" stroke="#000" stroke-width="2.200"/></svg></button>
          <button class="flex h-[30px] w-full items-center justify-center border-b border-[#ccc] pt-1" aria-label="Verkleinern"><svg class="h-[14px] w-[14px]" viewBox="0 0 14 14"><path d="M1 7h12" stroke="#000" stroke-width="2.200"/></svg></button>
          <button class="flex h-[30px] w-full items-center justify-center" aria-label="Vollbild"><svg class="h-4 w-4" viewBox="0 0 16 16"><path d="M1.200 5V1.200H5M11 1.200h3.800V5M14.800 11v3.800H11M5 14.800H1.200V11" fill="none" stroke="#000" stroke-width="2.400"/></svg></button>
        </div>
        <div class="absolute right-0 bottom-0 bg-white/80 px-[5px] text-[12px] leading-[17px] text-[#333]"><a href="#" class="text-[#0078a8]">Leaflet</a> | © 2023 <a href="#" class="text-[#0078a8]">basemap.de</a> / BKG | Datenquellen: © GeoBasis-DE | <a href="#" class="text-[#0078a8]">© www.berlinonline.net</a></div>
      </div>
      <a href="#" class="flex items-center justify-end gap-[6px] text-[#808080]"><svg class="h-3 w-3" viewBox="0 0 12 12" fill="none" stroke="#8d8d8d" stroke-width="1.500"><path d="M1 4V1h3M1 1l3.500 3.500M8 1h3v3M11 1L7.500 4.500M1 8v3h3M1 11l3.500-3.500M11 8v3H8M11 11L7.500 7.500"/></svg>große Karte</a>
    </div>
  </main>

  <footer class="flex h-[83px] shrink-0 items-center justify-end gap-[21px] border-b border-[#4b5768] bg-[#041935] pr-[19px] text-[16px] leading-6 text-white shadow-[0_-2px_6px_rgba(0,0,0,0.35)]">
    <p>Bitte wählen Sie zuerst eine Dienstleistung aus. <a href="#" class="underline underline-offset-2">Zu den verfügbaren Dienstleistungen</a></p>
    <button class="flex h-[43px] items-stretch border-2 border-[#7e899b] text-[#6f7b8d]"><span class="flex items-center px-4">An diesem Standort einen Termin buchen</span><span class="flex w-[43px] items-center justify-center border-l-2 border-[#7e899b]"><svg class="h-[15px] w-4" viewBox="0 0 16 15" fill="none" stroke="#8d97a6" stroke-width="2.600"><path d="M0 7.500h14M8 1l6.500 6.500L8 14"/></svg></span></button>
  </footer>
  <div class="pointer-events-none absolute top-[37px] right-0 bottom-0 z-20 w-7 bg-linear-to-r from-black/0 via-black/10 to-black/50"></div>
</section>

<!-- right window -->
<section class="relative flex min-h-0 min-w-0 flex-col overflow-hidden rounded-t-lg border-t border-[#66676b] bg-[#e2e2e2]">
  <div class="shrink-0 font-[Inter,sans-serif] text-[12px] leading-[16px]">
    <div class="flex h-[37px] items-end bg-[#0f1015] text-[#b0b1b5]">
      <div class="flex h-full w-[89px] shrink-0 items-center gap-2 pl-[21px]"><span class="h-3 w-3 rounded-full bg-[#ff5f57]"></span><span class="h-3 w-3 rounded-full bg-[#fdb03a]"></span><span class="h-3 w-3 rounded-full bg-[#28c840]"></span></div>
      <div class="flex h-[30px] w-[179px] items-center gap-2 pr-1 pl-2"><svg class="h-4 w-4 shrink-0" viewBox="0 0 16 16" fill="none" stroke="#8f9195" stroke-width="2.400"><circle cx="4.800" cy="8" r="3.500"/><circle cx="11.200" cy="8" r="3.500"/></svg><span class="overflow-hidden whitespace-nowrap [mask-image:linear-gradient(to_right,#000_85%,transparent)]">romabobRL.ipynb - Colaboratory</span></div>
      <div class="flex h-[30px] w-[179px] items-center gap-2 rounded-t-md bg-[#2b2e3b] px-2 font-medium text-[#f0f0f2]"><svg class="h-4 w-4 shrink-0"><use href="#favB"/></svg><span class="flex-1 overflow-hidden whitespace-nowrap [mask-image:linear-gradient(to_right,#000_80%,transparent)]">Terminvergabe - Termin</span><button aria-label="Tab schließen"><svg class="h-[10px] w-[10px]"><use href="#close"/></svg></button></div>
      <div class="flex h-[30px] w-[179px] items-center gap-2 border-r border-[#35363c] pr-1 pl-2"><svg class="h-4 w-4 shrink-0" viewBox="0 0 16 16"><rect width="16" height="16" rx="2" fill="#1b1d29"/><path d="M2 4.500h6v7H5.500V7H2zM12 4.500h2.500l-3 7H9z" fill="#fff"/><circle cx="9.800" cy="5.700" r="1.200" fill="#fff"/></svg><span class="overflow-hidden whitespace-nowrap [mask-image:linear-gradient(to_right,#000_85%,transparent)]">ISP 2.4180 ▲ +1.34% Unnamed</span></div>
      <div class="flex h-[30px] w-[179px] items-center gap-2 border-r border-[#35363c] pr-1 pl-2"><svg class="h-4 w-4 shrink-0" viewBox="0 0 16 16"><path d="M5.500 1h5L16 10h-5z" fill="#fbbc04"/><path d="M5.500 1L8 5.500 2.700 15 0 10.300z" fill="#0f9d58"/><path d="M5.300 10H16l-2.700 5H2.700z" fill="#4285f4"/><path d="M11 10h5l-2.700 5z" fill="#ea4335"/></svg><span class="overflow-hidden whitespace-nowrap [mask-image:linear-gradient(to_right,#000_85%,transparent)]">romabobML - Google Drive</span></div>
      <div class="flex h-[30px] w-[179px] items-center gap-2 border-r border-[#35363c] pr-1 pl-2"><svg class="h-4 w-4 shrink-0" viewBox="0 0 16 16"><path d="M2 1h13l-1 14H1z" fill="#bdcfcf"/><path d="M12 2Q6 5 4 13l6-4q3-3 2-7z" fill="#4f6468"/></svg><span class="overflow-hidden whitespace-nowrap">utils.py - Text Editor</span></div>
      <div class="flex h-[30px] w-[179px] items-center gap-2 border-r border-[#35363c] pr-1 pl-2"><svg class="h-4 w-4 shrink-0" viewBox="0 0 16 16"><defs><linearGradient id="ig" x1="1" y1="0" x2="0" y2="1"><stop offset="0" stop-color="#8a2be2"/><stop offset=".5" stop-color="#f0265e"/><stop offset="1" stop-color="#ffb545"/></linearGradient></defs><circle cx="8" cy="8" r="8" fill="url(#ig)"/><g fill="none" stroke="#fff" stroke-width="1.100"><rect x="3.500" y="3.500" width="9" height="9" rx="2.500"/><circle cx="8" cy="8" r="2.200"/></g></svg><span class="overflow-hidden whitespace-nowrap [mask-image:linear-gradient(to_right,#000_85%,transparent)]">It's time to take a deep breath</span></div>
      <button class="mb-[9px] ml-4 text-white" aria-label="Neuer Tab"><svg class="h-3 w-3"><use href="#plus"/></svg></button>
      <button class="mr-[14px] mb-[9px] ml-auto text-[#e4e4e6]" aria-label="Tabs suchen"><svg class="h-3 w-3"><use href="#chev"/></svg></button>
    </div>
    <div class="flex h-9 items-center bg-[#2b2e3b] pr-[17px] pl-[15px] text-[#dcdde0]">
      <button aria-label="Zurück"><svg class="h-[14px] w-[14px]"><use href="#back"/></svg></button>
      <button class="ml-[18px] text-[#63666f]" aria-label="Vor"><svg class="h-[14px] w-[14px]"><use href="#fwd"/></svg></button>
      <button class="ml-[18px]" aria-label="Neu laden"><svg class="h-[14px] w-[14px]"><use href="#reload"/></svg></button>
      <svg class="ml-[130px] h-[14px] w-[12px]" viewBox="0 0 12 14" fill="none" stroke="#cbccd0" stroke-width="1.500"><path d="M1.500 1h9v12L6 9.500 1.500 13z"/></svg>
      <div class="ml-[16px] flex h-7 w-[460px] items-center rounded bg-[#1a1b20] pl-[14px] text-[14px]">
        <svg class="h-3 w-[10px] text-[#93989d]"><use href="#lock"/></svg>
        <span class="ml-[10px] flex-1 whitespace-nowrap text-[#83868d]"><span class="text-[#f1f2f3]">service.berlin.de</span>/terminvereinbarung/ter...</span>
        <div class="flex items-center" data-tpl="tpl-addr"></div>
      </div>
      <div class="ml-auto flex items-center text-[#dcdde0]" data-tpl="tpl-ext"></div>
    </div>
    <div class="flex h-[33px] items-center gap-4 bg-[#2b2e3b] pr-[18px] pb-[6px] pl-[14px] text-[#eeeff1]" data-tpl="tpl-marks"></div>
    <div class="h-[3px] bg-[#4c4d50]"></div>
  </div>

  <div class="z-10 flex h-[63px] shrink-0 items-center bg-white pr-[31px] pl-7 shadow-md">
    <div class="text-[20px] leading-6">Service-Portal<br><b>Berlin</b></div>
    <nav class="ml-auto flex gap-9 text-[18px] leading-6"><a href="#">Dienstleistungen</a><a href="#">Standorte</a><a href="#" class="font-bold">Terminvereinbarung</a><a href="#">Online erledigen</a><a href="#">App</a></nav>
    <div class="ml-9 flex gap-4 text-[11px] leading-[14px]">
      <button class="flex flex-col items-center"><svg class="mb-[3px] h-[30px] w-[30px]"><use href="#a11y"/></svg>Barrierefrei</button>
      <button class="flex flex-col items-center"><svg class="mb-[1px] h-8 w-8"><use href="#lens"/></svg>Suche</button>
      <button class="flex flex-col items-center"><svg class="mt-[3px] mb-1 h-[26px] w-7"><use href="#burger"/></svg>Menü</button>
    </div>
  </div>

  <div class="mx-auto flex min-h-0 w-[980px] flex-1 items-start gap-5 overflow-hidden bg-white pl-[180px] text-[13px] leading-[18px]">
    <main class="w-[540px] shrink-0">
      <div class="relative h-[7px] border-b border-[#bbb] bg-[#f3f3f3]"><div class="h-[6px] w-[25px] bg-[#666]"></div><svg class="absolute top-[5px] left-10 h-[10px] w-[18px]" viewBox="0 0 18 10"><path d="M0 1l9 8 9-8" fill="#fff" stroke="#bbb" stroke-width="1.200"/></svg></div>
      <section class="mt-5 rounded border border-[#b5daee] bg-[#d5eaf5] px-[13px] py-[9px]">
        <h2 class="font-bold">Wichtiger Hinweis:</h2>
        <p class="mt-[5px]">Ihr Termin ist eingetragen worden. Bitte drucken Sie diese Seite aus, damit Sie alle<br>Informationen zur Hand haben.<br>Wichtig für Ihren Besuch ist die Vorlage Ihrer Vorgangsnummer.</p>
        <p class="mt-[11px]">Eine Bestätigung Ihres Termins wurde auch per E-Mail versandt.</p>
        <ul class="mt-[13px]"><li class="-ml-4 flex items-center"><span class="mr-[7px] h-1 w-1 rounded-full bg-black"></span><svg class="mr-[6px] h-[13px] w-[13px]" viewBox="0 0 13 13"><path d="M3 0h7v5H3zM0 5.500h13V11h-2V8.500H2V11H0zM3 9.500h7V13H3z" fill="#222"/></svg><a href="#" class="text-[#13387f]">Klicken Sie hier, um Ihre Termindaten auszudrucken.</a></li></ul>
      </section>
      <section class="relative mt-[18px] border border-[#dedede] bg-[#f3f3f3] px-[17px] pt-[31px] pb-[27px]">
        <svg class="absolute -top-[7px] right-6 h-9 w-[18px]" viewBox="0 0 18 36" fill="none" stroke="#888" stroke-width="2"><path d="M12 7V5.500A4.700 4.700 0 0 0 2 5.500V27A7 7 0 0 0 16 27V6"/></svg>
        <h2 class="flex items-center gap-[13px] border-b border-[#dcdcdc] pb-[18px] font-bold"><svg class="h-[19px] w-[19px]" viewBox="0 0 19 19"><circle cx="9.500" cy="9.500" r="9.500" fill="#1b2f6e"/><path d="M5.500 10l3 3.500L13.500 6" fill="none" stroke="#fff" stroke-width="2"/></svg>Ihr Termin wurde erfolgreich gebucht!</h2>
        <div class="mt-[15px] grid grid-cols-2 gap-x-[10px] gap-y-[11px]">
          <div><b>Name:</b> Tommaso Romano<br><b>E-Mail:</b> info@tommasoromano.com<br><b>Code zur Absage:</b> 0b76<div class="mt-[10px]"><b>Dienstleistungen:</b><ul class="mt-px list-disc pl-[15px]"><li>Anmeldung einer Wohnung</li></ul></div></div>
          <div><b>Ihre Vorgangsnummer:</b><div class="mt-[2px] text-[19px] leading-6 font-bold text-[#b3131b]">265515</div></div>
          <div><b>Ort:</b><br>Bürgeramt Schöneberg - John-F.-<br>Kennedy-Platz -, 10825 Berlin</div>
          <div><b>Datum / Uhrzeit:</b><br>Di. 29. August 2023 / 12:12</div>
          <div class="whitespace-nowrap"><b>Zahlungsmöglichkeiten:</b><br>Am Standort kann nur mit girocard (mit<br>PIN) (ehemals EC Karte) bezahlt werden.<br>(keine Barzahlung)</div>
          <div><b>Zugang:</b>
            <div class="flex gap-1 text-[#232d6b]">
              <svg class="h-9 w-9" viewBox="0 0 36 36"><rect x=".5" y=".5" width="35" height="35" fill="#fff" stroke="currentColor"/><path d="M4.500 24V4.500h4q6 0 6 5t-6 5h-4" fill="none" stroke="currentColor" stroke-width="2.800"/><use href="#wheel" x="17" y="11" width="17" height="22"/></svg>
              <svg class="h-9 w-9" viewBox="0 0 36 36"><rect x=".5" y=".5" width="35" height="35" fill="#fff" stroke="currentColor"/><path d="M3.500 2v32M32.500 2v32M7.500 34V9.500h21V34M7.500 33h21" fill="none" stroke="currentColor" stroke-width="1.200"/><path d="M13 2.500v4.500M11.300 5L13 7l1.700-2M23.500 7.500V3M21.800 5l1.700-2 1.700 2" fill="none" stroke="currentColor" stroke-width="1.300"/><use href="#wheel" x="10" y="11" width="16" height="20"/></svg>
              <svg class="h-9 w-9 bg-[#232d6b] text-white" viewBox="0 0 36 36"><text x="2" y="8" font-size="8" font-weight="700" fill="#fff" font-family="Noto Sans">WC</text><use href="#wheel" x="10" y="2" width="26" height="32"/></svg>
            </div>
            <a href="#" class="block text-[11px] text-[#174791]">Erläuterung der Symbole</a>
            <p class="mt-[10px] whitespace-nowrap">Ein barrierefreier Zugang ist über den<br>Eingang Freiherr-vom-Stein-Straße<br>möglich. Das Bürgeramt ist im<br>Erdgeschoss, und dort über einen<br>Plattformlift (100 cm x 80 cm, Traglast:<br>300 kg) erreichbar. Behinderten-WC und<br>Behindertenparkplätze sind vorhanden.<br>Für hörbehinderte Menschen können<br>mobile Ringschleifen angeboten werden.</p>
          </div>
        </div>
      </section>
      <h2 class="mt-4 text-[17px] leading-6 font-bold">Anmeldung einer Wohnung:</h2>
      <section class="mt-[5px] bg-[#f7f7f7] px-5 pt-[15px] pb-5">
        <h3 class="text-[17px] leading-6 font-bold text-[#b3131b]">Voraussetzungen</h3>
        <p class="mt-[10px] whitespace-nowrap"><b>Persönliches Erscheinen (Vertretung möglich)</b><br>Sie können sich nur vor Ort anmelden oder sich durch eine andere Person vor Ort<br>vertreten lassen. Dafür müssen Sie der anderen Person eine Vollmacht und das</p>
      </section>
    </main>
    <aside class="-mt-[5px] w-[220px] shrink-0 border border-t-0 border-[#d3d3d3] bg-[#e9e9e9] px-[18px] pb-7">Termin verfügbar sein<br>gelangen Sie auf eine<br>Hinweisseite, auf der Sie die<br>Terminsuche wiederholen<br>können.<br>Mehr dazu unter: <a href="#" class="text-[#13387f]">Es ist nichts<br>mehr frei, was nun?</a></aside>
  </div>
</section>
</div>

<script>
  document.querySelectorAll('[data-tpl]').forEach(function (slot) {
    slot.appendChild(document.getElementById(slot.dataset.tpl).content.cloneNode(true));
  });
</script>
</body>
</html>
